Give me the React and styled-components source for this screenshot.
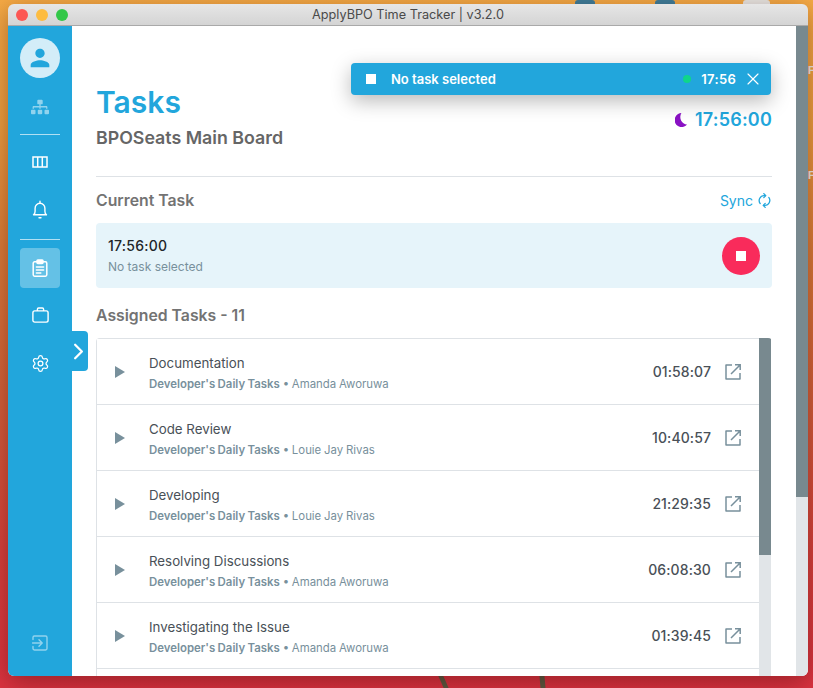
import React from 'react'
import styled, { createGlobalStyle } from 'styled-components'
import { FaSitemap } from 'react-icons/fa'
import { MdPerson } from 'react-icons/md'
import { ChevronRight, Settings, X } from 'lucide-react'

const BLUE = '#22a6dc'

const tasks = [
  { name: 'Documentation', owner: 'Amanda Aworuwa', time: '01:58:07' },
  { name: 'Code Review', owner: 'Louie Jay Rivas', time: '10:40:57' },
  { name: 'Developing', owner: 'Louie Jay Rivas', time: '21:29:35' },
  { name: 'Resolving Discussions', owner: 'Amanda Aworuwa', time: '06:08:30' },
  { name: 'Investigating the Issue', owner: 'Amanda Aworuwa', time: '01:39:45' },
]

const GlobalStyle = createGlobalStyle`
  html, body {
    margin: 0;
    height: 100%;
    overflow: hidden;
  }
  * {
    box-sizing: border-box;
  }
  body {
    font-family: Inter, "Liberation Sans", sans-serif;
  }
`

const Desktop = styled.div`
  position: relative;
  width: 813px;
  height: 688px;
  padding: 4px 5px 12px 8px;
  overflow: hidden;
  background: linear-gradient(180deg, #f6aa45 0%, #ee9f3f 18%, #dc7d38 36%, #d4603a 58%, #d8423c 80%, #dc3340 100%);
`

// things lying on the wallpaper behind the window
const DesktopPin = styled.div`
  position: absolute;
  top: 0;
  left: ${(p) => p.$x}px;
  width: ${(p) => p.$w}px;
  height: 4px;
  background: ${(p) => p.$color};
  border-radius: 3px 3px 0 0;
`

const DesktopLabel = styled.span`
  position: absolute;
  left: 808px;
  top: ${(p) => p.$y}px;
  font-size: 11px;
  font-weight: 700;
  line-height: 12px;
  color: #f2eee8;
`

const DesktopLine = styled.div`
  position: absolute;
  top: 676px;
  left: ${(p) => p.$x}px;
  width: 5px;
  height: 12px;
  background: #5d5a40;
  transform: skewX(${(p) => p.$skew}deg);
`

const Window = styled.div`
  position: relative;
  width: 800px;
  height: 672px;
  display: flex;
  flex-direction: column;
  border-radius: 6px;
  overflow: hidden;
  box-shadow: 0 6px 26px rgba(40, 0, 0, 0.38);
`

const TitleBar = styled.div`
  flex: 0 0 22px;
  display: flex;
  align-items: center;
  justify-content: center;
  position: relative;
  background: linear-gradient(180deg, #e6e6e6, #d4d4d4);
  border-bottom: 1px solid #a9a9a9;
  font-size: 12.7px;
  color: #4a4a4a;
`

const Lights = styled.div`
  position: absolute;
  left: 8px;
  top: 5px;
  display: flex;
  gap: 8px;
`

const Light = styled.span`
  width: 12px;
  height: 12px;
  border-radius: 50%;
  background: ${(p) => p.$color};
`

const Body = styled.div`
  flex: 1;
  min-height: 0;
  display: flex;
  background: #fff;
`

const Sidebar = styled.nav`
  flex: 0 0 64px;
  display: flex;
  flex-direction: column;
  align-items: center;
  padding-top: 12px;
  background: ${BLUE};
`

const Avatar = styled.div`
  width: 40px;
  height: 40px;
  margin-bottom: 9px;
  border-radius: 50%;
  background: #d3edf8;
  color: ${BLUE};
  display: flex;
  align-items: center;
  justify-content: center;
`

const NavItem = styled.div`
  width: 40px;
  height: 40px;
  margin-bottom: ${(p) => p.$gap ?? 8}px;
  border-radius: 4px;
  display: flex;
  align-items: center;
  justify-content: center;
  color: ${(p) => (p.$muted ? 'rgba(255,255,255,.5)' : '#fff')};
  background: ${(p) => (p.$active ? 'rgba(255,255,255,.3)' : 'transparent')};
`

const NavDivider = styled.div`
  width: 40px;
  height: 1px;
  margin-bottom: ${(p) => p.$gap}px;
  background: rgba(255, 255, 255, 0.65);
`

const BottomItem = styled(NavItem)`
  margin-top: auto;
  margin-bottom: 13px;
`

const Expander = styled.div`
  position: absolute;
  left: 64px;
  top: 327px;
  width: 16px;
  height: 40px;
  border-radius: 0 4px 4px 0;
  background: ${BLUE};
  color: #fff;
  display: flex;
  align-items: center;
  justify-content: center;
  svg {
    flex-shrink: 0;
    margin-left: -4px;
  }
`

const Main = styled.main`
  flex: 1;
  min-width: 0;
  display: flex;
`

const Content = styled.div`
  flex: 1;
  min-width: 0;
  display: flex;
  flex-direction: column;
  padding: 58px 24px 0;
`

const Header = styled.header`
  display: flex;
  justify-content: space-between;
  align-items: flex-end;
  padding-bottom: 27px;
  border-bottom: 1px solid #dee2e6;
`

const Title = styled.h1`
  margin: 0 0 6px;
  font-size: 30px;
  line-height: 37px;
  font-weight: 600;
  color: ${BLUE};
`

const Board = styled.h2`
  margin: 0;
  font-size: 17.8px;
  line-height: 22px;
  font-weight: 600;
  color: #666;
`

const Clock = styled.div`
  display: flex;
  align-items: center;
  gap: 8px;
  margin-bottom: 18px;
  font-size: 18px;
  line-height: 22px;
  font-weight: 600;
  letter-spacing: 0.2px;
  color: ${BLUE};
`

const SectionRow = styled.div`
  display: flex;
  justify-content: space-between;
  align-items: center;
  height: 46px;
`

const SectionTitle = styled.h3`
  margin: 0;
  font-size: 15.8px;
  font-weight: 600;
  color: #737373;
`

const Sync = styled.div`
  display: flex;
  align-items: center;
  gap: 5px;
  padding-right: 1px;
  font-size: 14px;
  color: ${BLUE};
`

const CurrentCard = styled.div`
  flex: 0 0 65px;
  display: flex;
  justify-content: space-between;
  align-items: center;
  padding: 0 12px;
  border-radius: 4px;
  background: #e6f4fa;
`

const CurrentTime = styled.div`
  font-size: 14px;
  line-height: 17px;
  font-weight: 500;
  letter-spacing: 0.25px;
  color: #212529;
  margin-bottom: 5px;
`

const CurrentName = styled.div`
  font-size: 12px;
  line-height: 15px;
  color: #78909c;
`

const StopButton = styled.div`
  width: 38px;
  height: 38px;
  border-radius: 50%;
  background: #f92b5b;
  display: flex;
  align-items: center;
  justify-content: center;
`

const StopMark = styled.span`
  width: 10px;
  height: 10px;
  background: #fff;
`

const AssignedRow = styled(SectionRow)`
  flex: 0 0 50px;
  height: 50px;
  padding-top: 4px;
`

const TaskPanel = styled.div`
  flex: 1;
  min-height: 0;
  display: flex;
  overflow: hidden;
  padding-right: 1px;
  border-radius: 4px 4px 0 0;
`

const TaskList = styled.div`
  flex: 1;
  min-width: 0;
  border: 1px solid #dee2e6;
  border-right: 0;
  border-bottom: 0;
`

const TaskRow = styled.div`
  height: 66px;
  display: flex;
  align-items: center;
  padding: 0 18px 0 18px;
  border-bottom: 1px solid #dee2e6;
`

const PlayMark = styled.span`
  width: 0;
  height: 0;
  margin-right: 24px;
  border-left: 10px solid #78909c;
  border-top: 6px solid transparent;
  border-bottom: 6px solid transparent;
`

const TaskInfo = styled.div`
  flex: 1;
  min-width: 0;
  padding-top: 3px;
`

const TaskName = styled.div`
  font-size: 13.3px;
  line-height: 17px;
  color: #495057;
  margin-bottom: 5px;
`

const TaskMeta = styled.div`
  font-size: 11.4px;
  line-height: 15px;
  word-spacing: -0.4px;
  color: #78909c;
  b {
    font-weight: 600;
  }
`

const TaskTime = styled.div`
  font-size: 14px;
  font-weight: 500;
  letter-spacing: 0.1px;
  color: #495057;
  margin-right: 14px;
`

const Scrollbar = styled.div`
  flex: 0 0 12px;
  background: #e1e5e8;
`

const Thumb = styled.div`
  height: ${(p) => p.$height}px;
  background: #78898f;
`

const Bubble = styled.div`
  position: absolute;
  left: 343px;
  top: 59px;
  width: 420px;
  height: 32px;
  display: flex;
  align-items: center;
  padding: 0 8px 0 15px;
  border-radius: 4px;
  background: ${BLUE};
  box-shadow: 0 6px 20px rgba(0, 0, 0, 0.28);
  color: #fff;
  font-size: 13px;
  font-weight: 600;
`

const BubbleStop = styled.span`
  width: 10px;
  height: 10px;
  margin-right: 15px;
  background: #fff;
`

const BubbleText = styled.span`
  flex: 1;
`

const Dot = styled.span`
  width: 8px;
  height: 8px;
  margin-right: 10px;
  border-radius: 50%;
  background: #0fd68a;
`

const BubbleTime = styled.span`
  margin-right: 7px;
  letter-spacing: 0.3px;
`

const BoardIcon = () => (
  <svg width="16" height="16" viewBox="0 0 16 16" fill="none" stroke="currentColor" strokeWidth="1.5">
    <rect x="1" y="3" width="14" height="10" />
    <path d="M5.7 3v10M10.3 3v10" />
  </svg>
)

const BellIcon = () => (
  <svg width="16" height="20" viewBox="0 0 16 20" fill="none" stroke="currentColor" strokeWidth="1.4" strokeLinecap="round" strokeLinejoin="round">
    <path d="M1.5 14.8c1.2-.8 1.6-2 1.6-3.6V8.2a4.9 4.9 0 0 1 9.8 0v3c0 1.6.4 2.8 1.6 3.6Z" />
    <path d="M8 1.2v2M7 17.8h2" />
  </svg>
)

const ClipboardIcon = () => (
  <svg width="16" height="18" viewBox="0 0 16 18" fill="none" stroke="currentColor" strokeWidth="1.5" strokeLinecap="round">
    <path d="M5 2.8H2.6A1.4 1.4 0 0 0 1.2 4.2v11.6a1.4 1.4 0 0 0 1.4 1.4h10.8a1.4 1.4 0 0 0 1.4-1.4V4.2a1.4 1.4 0 0 0-1.4-1.4H11" />
    <rect x="5" y="1" width="6" height="3.4" rx="0.8" fill="currentColor" />
    <path d="M4.4 8h7.2M4.4 11h7.2M4.4 14h4.4" />
  </svg>
)

const BriefcaseIcon = () => (
  <svg width="17" height="16" viewBox="0 0 17 16" fill="none" stroke="currentColor" strokeWidth="1.4">
    <rect x="0.9" y="3.9" width="15.2" height="11.2" rx="1.8" />
    <path d="M5.4 3.9V2.2a1.2 1.2 0 0 1 1.2-1.2h3.8a1.2 1.2 0 0 1 1.2 1.2v1.7" />
  </svg>
)

const LogoutIcon = () => (
  <svg width="16" height="16" viewBox="0 0 16 16" fill="none" stroke="currentColor" strokeWidth="1.4" strokeLinecap="round" strokeLinejoin="round">
    <path d="M1 4.5V2.4A1.4 1.4 0 0 1 2.4 1h11.2A1.4 1.4 0 0 1 15 2.4v11.2a1.4 1.4 0 0 1-1.4 1.4H2.4A1.4 1.4 0 0 1 1 13.6v-2.1" />
    <path d="M0.5 8h9.5M7 4.8 10.2 8 7 11.2" />
  </svg>
)

const MoonIcon = () => (
  <svg width="12" height="14" viewBox="0 0 12 14" fill="#8a12c4">
    <path d="M6.4 0.1A7 7 0 1 0 12 11.6 7.6 7.6 0 0 1 6.4 0.1Z" />
  </svg>
)

const SyncIcon = () => (
  <svg width="13" height="15" viewBox="0 0 13 15" fill="none" stroke={BLUE} strokeWidth="1.3" strokeLinecap="round" strokeLinejoin="round">
    <path d="M2.2 10.6A5 5 0 0 1 6.4 2.6h1" />
    <path d="M5.8 0.6 7.8 2.6 5.8 4.6" />
    <path d="M10.8 4.4A5 5 0 0 1 6.6 12.4h-1" />
    <path d="M7.2 10.4 5.2 12.4 7.2 14.4" />
  </svg>
)

const OpenIcon = () => (
  <svg width="16" height="16" viewBox="0 0 16 16" fill="none" stroke="#78909c" strokeWidth="1.5">
    <path d="M7 1H1v14h14V9" strokeLinejoin="round" />
    <path d="M6 10 15 1M10 .8h5.2V6" />
  </svg>
)

function App() {
  return (
    <Desktop>
      <GlobalStyle />
      <DesktopPin $x={575} $w={20} $color="#3f7f9c" />
      <DesktopPin $x={655} $w={20} $color="#3f7f9c" />
      <DesktopPin $x={743} $w={27} $color="#eae8e4" />
      <DesktopLabel $y={64}>F</DesktopLabel>
      <DesktopLabel $y={169}>F</DesktopLabel>
      <DesktopLine $x={441} $skew={24} />
      <DesktopLine $x={540} $skew={5} />
      <Window>
        <TitleBar>
          <Lights>
            <Light $color="#fc5753" />
            <Light $color="#fdbc40" />
            <Light $color="#33c748" />
          </Lights>
          ApplyBPO Time Tracker | v3.2.0
        </TitleBar>
        <Body>
          <Sidebar>
            <Avatar><MdPerson size={28} /></Avatar>
            <NavItem $muted $gap={7}><FaSitemap size={18} /></NavItem>
            <NavDivider $gap={7} />
            <NavItem><BoardIcon /></NavItem>
            <NavItem $gap={9}><BellIcon /></NavItem>
            <NavDivider $gap={8} />
            <NavItem $active $gap={7}><ClipboardIcon /></NavItem>
            <NavItem><BriefcaseIcon /></NavItem>
            <NavItem><Settings size={19} strokeWidth={1.6} /></NavItem>
            <BottomItem $muted><LogoutIcon /></BottomItem>
          </Sidebar>
          <Main>
            <Content>
              <Header>
                <div>
                  <Title>Tasks</Title>
                  <Board>BPOSeats Main Board</Board>
                </div>
                <Clock><MoonIcon />17:56:00</Clock>
              </Header>
              <SectionRow>
                <SectionTitle>Current Task</SectionTitle>
                <Sync>Sync <SyncIcon /></Sync>
              </SectionRow>
              <CurrentCard>
                <div>
                  <CurrentTime>17:56:00</CurrentTime>
                  <CurrentName>No task selected</CurrentName>
                </div>
                <StopButton><StopMark /></StopButton>
              </CurrentCard>
              <AssignedRow>
                <SectionTitle>Assigned Tasks - 11</SectionTitle>
              </AssignedRow>
              <TaskPanel>
                <TaskList>
                  {tasks.map((task) => (
                    <TaskRow key={task.name}>
                      <PlayMark />
                      <TaskInfo>
                        <TaskName>{task.name}</TaskName>
                        <TaskMeta><b>Developer's Daily Tasks</b> • {task.owner}</TaskMeta>
                      </TaskInfo>
                      <TaskTime>{task.time}</TaskTime>
                      <OpenIcon />
                    </TaskRow>
                  ))}
                </TaskList>
                <Scrollbar><Thumb $height={217} /></Scrollbar>
              </TaskPanel>
            </Content>
            <Scrollbar><Thumb $height={471} /></Scrollbar>
          </Main>
        </Body>
        <Expander><ChevronRight size={27} strokeWidth={2} /></Expander>
        <Bubble>
          <BubbleStop />
          <BubbleText>No task selected</BubbleText>
          <Dot />
          <BubbleTime>17:56</BubbleTime>
          <X size={20} strokeWidth={1.4} />
        </Bubble>
      </Window>
    </Desktop>
  )
}

export default App
